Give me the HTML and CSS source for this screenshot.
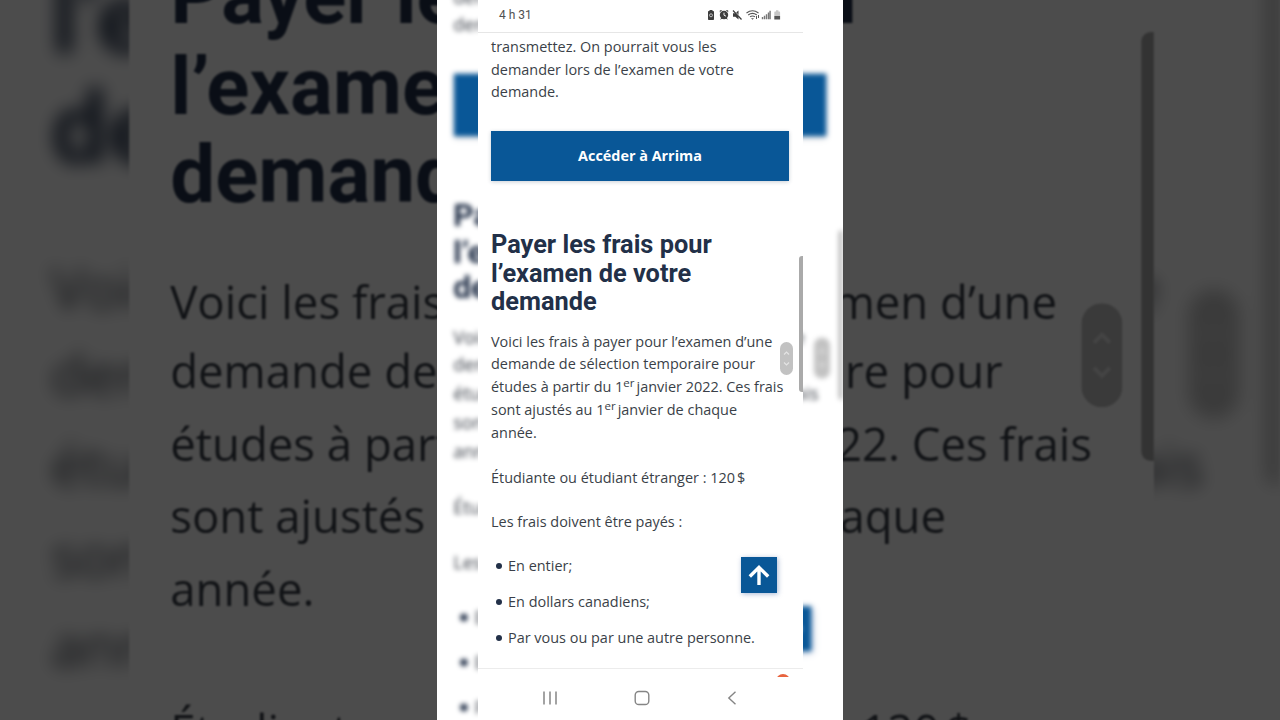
FILE: index.html
```
<!DOCTYPE html>
<html lang="fr">
<head>
<meta charset="utf-8">
<title>Payer les frais</title>
<link rel="stylesheet" href="styles.css">
</head>
<body>
<main class="stage">
  <div class="frame" id="frame">
    <div class="phone" id="phone">
      <header class="status">
        <span class="time">4 h 31</span>
        <svg class="status-icons" width="76" height="12" viewBox="0 0 76 12">
          <g fill="#3d3d3d">
            <path d="M2.500 1h3v1h.7q.8 0 .8.8v7.400q0 .8-.8.8H1.800q-.8 0-.8-.8V2.800q0-.8.8-.8h.7z"/>
            <circle cx="17" cy="6" r="4.200"/>
            <path d="M12.700 3.200 12.900 1.200 15.500 1.300zM21.300 3.200 21.100 1.200 18.500 1.300zM13 10.800 14.500 8.500 15.500 9.500zM21 10.800 19.500 8.500 18.500 9.500z"/>
            <path d="M26 4.300h2.300L31.500 1.500v9L28.300 7.700H26z"/>
          </g>
          <circle cx="4" cy="6.300" r="1.500" fill="none" stroke="#ddd" stroke-width=".8"/>
          <path d="M17 3.700V6.200l2 1" fill="none" stroke="#eee" stroke-width="1"/>
          <path d="M26.500 1.300 34.500 9.700" stroke="#fff" stroke-width="1.200"/>
          <path d="M26 1.500 34.500 10.500" stroke="#3d3d3d" stroke-width="1.200"/>
          <g fill="none" stroke="#555" stroke-width="1.100">
            <path d="M39.500 4Q45.500-.6 51.500 4M41.200 6Q45.500 2.800 49.800 6M43 7.900Q45.500 6 48 7.900"/>
          </g>
          <path d="M44 9.300h3l-1.500 1.500z" fill="#555"/>
          <path d="M49.500 7v3M51.500 6v3" stroke="#555" stroke-width="1"/>
          <path d="M55.500 10.200V8M57.500 10.200V6.700M59.500 10.200V5.200M61.500 10.200V3.500M63.100 10.200V1.800" stroke="#777" stroke-width="1.400"/>
          <path d="M68 2.500h1V1.200h2.400V2.500h1q.7 0 .7.900V7h-5.800V3.400q0-.9.700-.9z" fill="#c6c6c6"/>
          <path d="M67.300 7h5.800v3.500h-5.800z" fill="#555"/>
        </svg>
      </header>
      <section class="page">
        <p>transmettez. On pourrait vous les<br>demander lors de l’examen de votre<br>demande.</p>
        <div class="cta">Accéder à Arrima</div>
        <h2>Payer les frais pour<br>l’examen de votre<br>demande</h2>
        <p class="fees">Voici les frais à payer pour l’examen d’une<br>demande de sélection temporaire pour<br>études à partir du 1<sup>er</sup>janvier 2022. Ces frais<br>sont ajustés au 1<sup>er</sup>janvier de chaque<br>année.</p>
        <p class="note">Étudiante ou étudiant étranger : 120<span class="thin"></span>$</p>
        <p class="note">Les frais doivent être payés :</p>
        <ul>
          <li>En entier;</li>
          <li>En dollars canadiens;</li>
          <li>Par vous ou par une autre personne.</li>
        </ul>
        <div class="divider"></div>
        <div class="scrollbar"></div>
        <svg class="grip" width="13" height="33" viewBox="0 0 13 33">
          <rect width="13" height="33" rx="6.500" fill="#c2c2c2"/>
          <path d="M4 12.500 6.500 10 9 12.500M4 20.500 6.500 23 9 20.500" fill="none" stroke="#e4e4e4" stroke-width="1.200"/>
        </svg>
        <div class="totop">
          <svg width="36" height="36" viewBox="0 0 36 36"><path d="M18 28V10.500M8.800 19.500 18 10.300 27.200 19.500" fill="none" stroke="#fff" stroke-width="3.400"/></svg>
        </div>
        <div class="badge"></div>
      </section>
      <footer class="nav">
        <svg width="14" height="16" viewBox="0 0 14 16"><path d="M1 1.500v13M7 1.500v13M13 1.500v13" stroke="#858585" stroke-width="1.500"/></svg>
        <svg width="16" height="16" viewBox="0 0 16 16"><rect x="1.200" y="1.500" width="13.600" height="13" rx="3.600" fill="none" stroke="#858585" stroke-width="1.400"/></svg>
        <svg width="10" height="16" viewBox="0 0 10 16"><path d="M8.500 1.700 1.800 8 8.500 14.300" fill="none" stroke="#858585" stroke-width="1.400"/></svg>
      </footer>
    </div>
  </div>
</main>
<script src="script.js"></script>
</body>
</html>
```

FILE: styles.css
```
body {
  margin: 0;
  background: #4c4c4c;
}

.stage {
  position: relative;
  width: 1280px;
  height: 720px;
  overflow: hidden;
  display: flex;
  justify-content: center;
}

.frame {
  position: relative;
  width: 406px;
  height: 720px;
  overflow: hidden;
  background: #fff;
  display: flex;
  justify-content: center;
}

/* enlarged, darkened copy that fills the sides */
.frame.backdrop {
  position: absolute;
  left: 437px;
  top: 0;
  transform: scale(3.153);
  filter: brightness(.3) blur(.3px);
}

.phone {
  position: relative;
  flex: none;
  width: 325px;
  height: 720px;
  background: #fff;
  color: #3a3f48;
  font-family: "Open Sans", "Noto Sans", sans-serif;
  font-size: 14.440px;
  line-height: 22.900px;
  display: flex;
  flex-direction: column;
  white-space: nowrap;
  overflow: hidden;
}

.phone.blurred {
  position: absolute;
  left: 40px;
  top: 0;
  transform: scale(1.25);
  filter: blur(2.300px);
}

.status {
  box-sizing: border-box;
  flex: none;
  height: 33px;
  padding: 0 20px 2px 21.500px;
  border-bottom: 1px solid #e6e6e6;
  display: flex;
  align-items: center;
  justify-content: space-between;
}

.time {
  padding-top: 1px;
  font-family: Roboto, sans-serif;
  font-size: 12px;
  color: #505050;
}

.page {
  position: relative;
  box-sizing: border-box;
  height: 644px;
  padding: 2.600px 13.500px 0;
  overflow: hidden;
}

.page p {
  margin: 0;
}

.cta {
  height: 50px;
  margin: 26.200px 0 49.300px;
  background: #095797;
  color: #fff;
  font-weight: 700;
  font-size: 14.400px;
  line-height: 50px;
  text-align: center;
  box-shadow: 0 1px 4px rgba(34, 54, 84, .24);
}

h2 {
  margin: 0 0 14.400px;
  font-family: Roboto, sans-serif;
  font-size: 25.350px;
  line-height: 28.800px;
  font-weight: 700;
  color: #223048;
}

.page sup {
  font-size: 11.500px;
  line-height: 0;
  vertical-align: 5px;
  margin-right: 2px;
}

.page .note {
  margin-top: 21.500px;
}

.thin {
  display: inline-block;
  width: 2px;
}

ul {
  margin: 20.600px 0 18.100px;
  padding: 0;
  list-style: none;
}

li {
  display: flex;
  align-items: center;
  margin-bottom: 13.100px;
}

li:last-child {
  margin-bottom: 0;
}

li::before {
  content: "";
  width: 6px;
  height: 6px;
  margin: 0 6px 0 5px;
  border-radius: 50%;
  background: #223048;
}

.divider {
  height: 1px;
  margin: 0 -13.500px;
  background: #ececec;
}

.scrollbar {
  position: absolute;
  right: 0;
  top: 223px;
  width: 3.500px;
  height: 136px;
  border-radius: 3px 0 0 3px;
  background: #aaa;
}

.grip {
  position: absolute;
  right: 9.600px;
  top: 309px;
}

.totop {
  position: absolute;
  right: 25.500px;
  top: 524px;
  width: 36px;
  height: 36px;
  background: #095797;
  box-shadow: 1px 1px 5px rgba(34, 74, 144, .4);
}

.totop svg {
  display: block;
}

.badge {
  position: absolute;
  right: 13px;
  top: 640.500px;
  width: 14px;
  height: 14px;
  border-radius: 50%;
  background: #e8643f;
}

.nav {
  flex: 1;
  display: flex;
  align-items: center;
  justify-content: space-between;
  padding: 0 66px 1px 65.500px;
}
```

FILE: script.js
```
// The blurred copy of the phone fills the frame behind the sharp one,
// and a copy of the whole frame fills the stage behind it.
const frame = document.getElementById("frame");
const phone = document.getElementById("phone");

const blurred = phone.cloneNode(true);
blurred.removeAttribute("id");
blurred.classList.add("blurred");
blurred.setAttribute("aria-hidden", "true");
frame.insertBefore(blurred, phone);

const backdrop = frame.cloneNode(true);
backdrop.removeAttribute("id");
backdrop.classList.add("backdrop");
backdrop.setAttribute("aria-hidden", "true");
frame.parentNode.insertBefore(backdrop, frame);
```
